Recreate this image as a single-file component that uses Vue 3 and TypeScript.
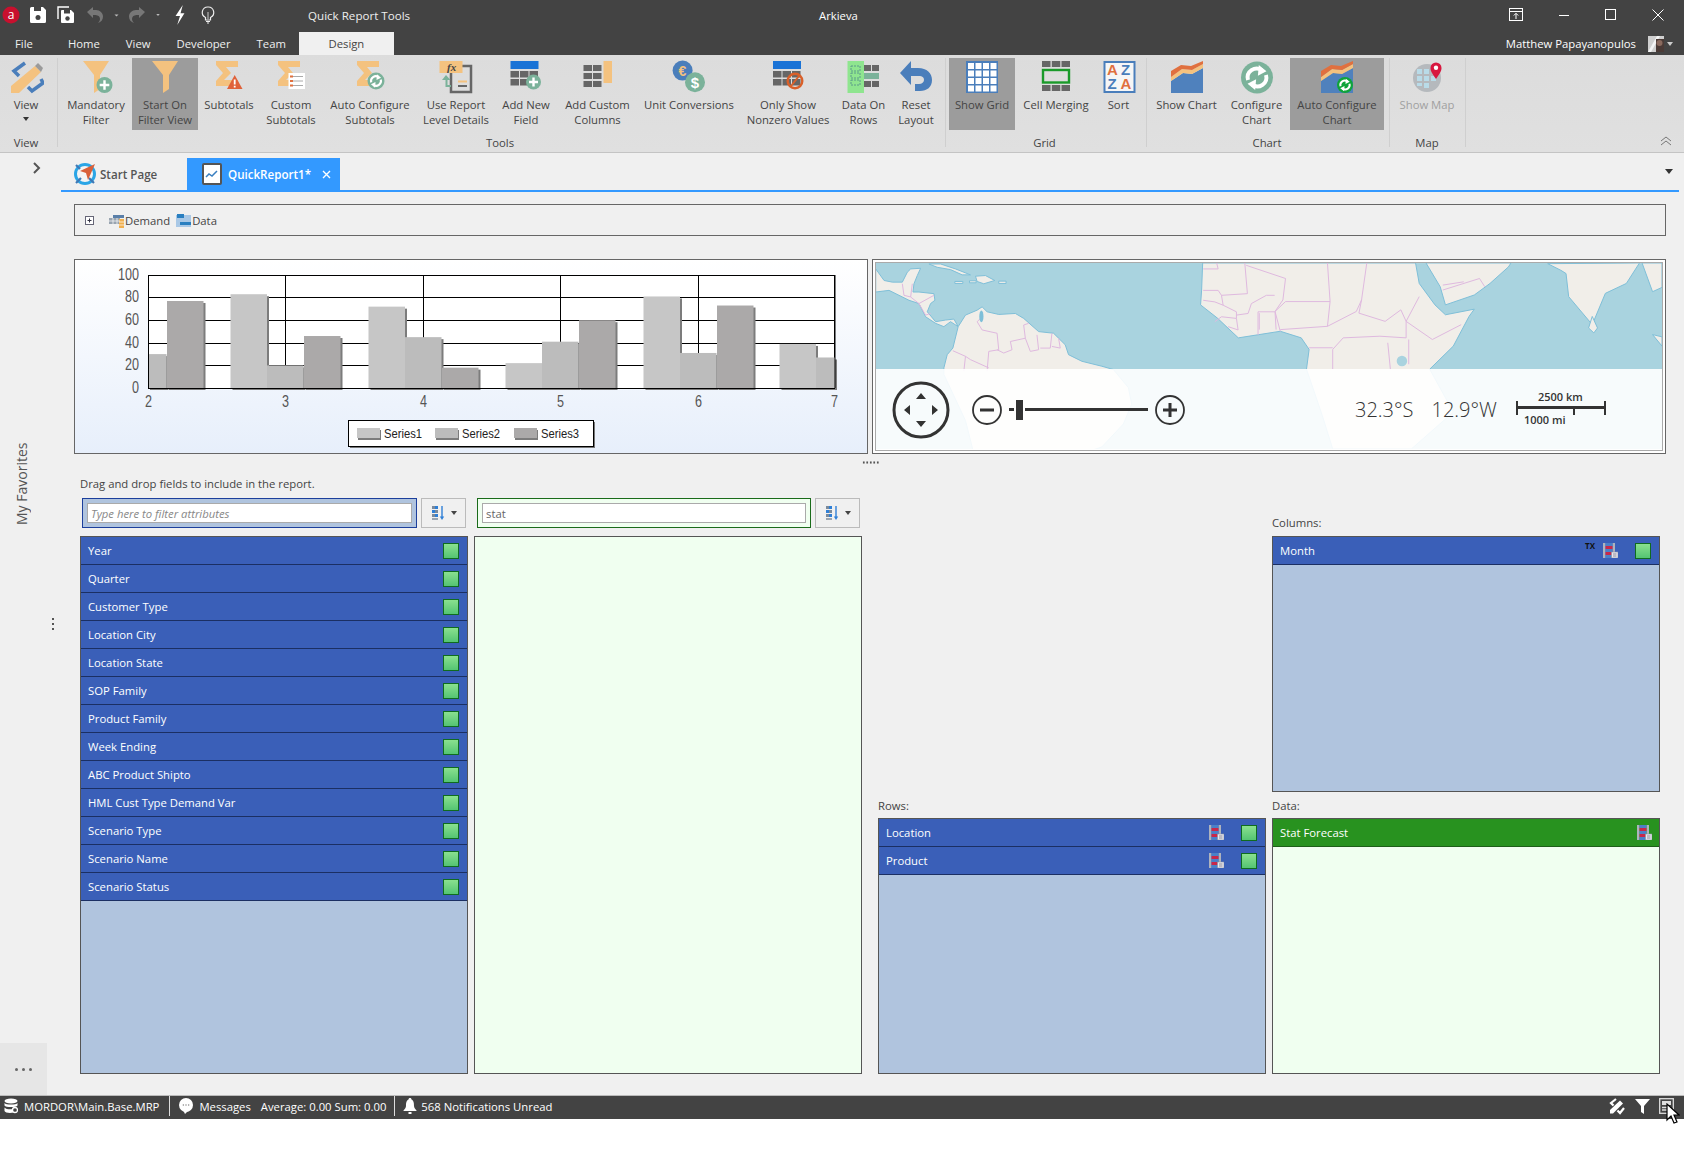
<template>
  <div class="app">
    <svg class="defs" width="0" height="0">
      <symbol id="field-icon" viewBox="0 0 15 15">
        <rect x="0" y="0" width="2.500" height="15" fill="#aeb3bd" />
        <rect x="9.500" y="0" width="2.500" height="15" fill="#aeb3bd" />
        <rect x="2.500" y="0" width="7" height="3" fill="#4a80c8" />
        <rect x="2.500" y="3" width="7" height="3" fill="#c8284a" />
        <rect x="2.500" y="6" width="7" height="3" fill="#4a80c8" />
        <rect x="2.500" y="9" width="7" height="3" fill="#c8284a" />
        <rect x="2.500" y="12" width="7" height="3" fill="#4a80c8" />
        <rect x="8.500" y="9" width="6.500" height="6" fill="#e8e8ee" stroke="#8890a0" stroke-width=".6" />
        <path d="M10 11h3.500M10 13h3.500" stroke="#667" stroke-width=".7" />
      </symbol>
      <symbol id="sort-icon" viewBox="0 0 16 16">
        <rect x="1" y="1" width="3" height="3" fill="#7a8a9c" />
        <rect x="4" y="1" width="3" height="3" fill="#2f7fd6" />
        <rect x="1" y="5" width="3" height="3" fill="#2f7fd6" />
        <rect x="4" y="5" width="3" height="3" fill="#7a8a9c" />
        <rect x="1" y="9" width="3" height="3" fill="#7a8a9c" />
        <rect x="4" y="9" width="3" height="3" fill="#2f7fd6" />
        <rect x="1" y="13" width="6" height="2" fill="#9aa5b1" />
        <path d="M11 1v12" stroke="#2f7fd6" stroke-width="1.400" />
        <path d="M8.800 11.500h4.400L11 15z" fill="#2f7fd6" />
      </symbol>
    </svg>

    <header class="titlebar">
      <div class="title-row">
        <div class="qat">
          <span v-for="q in qatItems" :key="q.name + q.width" class="qat-btn" :style="{ width: q.width + 'px' }">
            <svg :width="q.size" :height="q.size" viewBox="0 0 18 18" v-html="qatIcons[q.name]"></svg>
          </span>
        </div>
        <div class="context-title">Quick Report Tools</div>
        <div class="app-title">Arkieva</div>
        <div class="window-buttons">
          <svg width="14" height="14" viewBox="0 0 14 14" fill="none" stroke="#fff">
            <rect x=".5" y=".5" width="13" height="12" />
            <path d="M.5 3.500h13M7 11V5.500M4.800 7.500 7 5.300l2.200 2.200" />
          </svg>
          <svg width="12" height="12" viewBox="0 0 12 12" stroke="#fff"><path d="M1 6.500h10" /></svg>
          <svg width="12" height="12" viewBox="0 0 12 12" fill="none" stroke="#fff"><rect x=".5" y=".5" width="10" height="10" /></svg>
          <svg width="12" height="12" viewBox="0 0 12 12" stroke="#fff"><path d="M.5.5l11 11M11.500.5l-11 11" /></svg>
        </div>
      </div>
      <div class="tab-row">
        <span class="menu-tab file-tab">File</span>
        <span v-for="t in menuTabs" :key="t" class="menu-tab">{{ t }}</span>
        <span class="menu-tab active">Design</span>
        <span class="user-name">Matthew Papayanopulos</span>
        <svg class="avatar" width="16" height="16" viewBox="0 0 16 16">
          <rect width="16" height="16" fill="#cfcfcf" />
          <path d="M0 16 9 0h3L3 16z" fill="#f4f4f4" />
          <rect x="8" y="3" width="8" height="13" fill="#4a3a36" />
          <circle cx="11.500" cy="7" r="3" fill="#8a6a5e" />
        </svg>
        <span class="avatar-caret"></span>
      </div>
    </header>

    <section class="ribbon">
      <div v-for="g in ribbonGroups" :key="g.label" class="ribbon-group" :class="'group-' + g.label.toLowerCase()">
        <div class="group-items">
          <div
            v-for="item in g.items"
            :key="item.label"
            class="ribbon-btn"
            :class="{ pressed: item.pressed, disabled: item.disabled }"
            :style="{ width: item.width + 'px' }"
          >
            <svg width="36" height="34" viewBox="0 0 36 34" v-html="icons[item.icon]"></svg>
            <span class="btn-label">{{ item.label }}</span>
            <span v-if="item.caret" class="btn-caret"></span>
          </div>
        </div>
        <div class="group-label">{{ g.label }}</div>
      </div>
      <svg class="ribbon-collapse" width="12" height="10" viewBox="0 0 12 10" fill="none" stroke="#777">
        <path d="M1 5l5-4 5 4M1 9l5-4 5 4" />
      </svg>
    </section>

    <div class="workspace">
      <aside class="rail">
        <svg class="rail-chevron" width="10" height="12" viewBox="0 0 10 12" fill="none" stroke="#555" stroke-width="2">
          <path d="M2 1l5 5-5 5" />
        </svg>
        <div class="favorites">My Favorites</div>
        <div class="rail-grip"><i></i><i></i><i></i></div>
        <div class="rail-more"><i></i><i></i><i></i></div>
      </aside>

      <main class="main">
        <div class="doc-tabs">
          <div class="doc-tab start-tab">
            <svg width="24" height="24" viewBox="0 0 24 24">
              <circle cx="12" cy="12" r="9.500" fill="#f4f4f4" stroke="#2aa5e6" stroke-width="3" />
              <path d="M3 21l5-5M21 21l-5-5M3 3l4 4" stroke="#3f78b5" stroke-width="2.200" />
              <path d="M22 2 7 9l6 2 2 7z" fill="#d9603a" />
            </svg>
            <span>Start Page</span>
          </div>
          <div class="doc-tab report-tab">
            <svg width="20" height="22" viewBox="0 0 20 22">
              <rect x="1" y="1" width="18" height="20" rx="1" fill="#fff" stroke="#555" stroke-width="2" />
              <path d="M4 14l3-3 3 2 5-5" fill="none" stroke="#3a7fc0" stroke-width="1.500" />
            </svg>
            <span>QuickReport1*</span>
            <svg class="tab-close" width="9" height="9" viewBox="0 0 9 9" stroke="#fff" stroke-width="1.400"><path d="M1 1l7 7M8 1 1 8" /></svg>
          </div>
          <span class="doc-dropdown"></span>
        </div>

        <div class="doc">
          <div class="source-bar">
            <svg class="expander" width="9" height="9" viewBox="0 0 9 9" fill="#fff" stroke="#667">
              <rect x=".5" y=".5" width="8" height="8" />
              <path d="M2.500 4.500h4M4.500 2.500v4" stroke="#334" />
            </svg>
            <svg width="15" height="14" viewBox="0 0 15 14">
              <rect x="0" y="4" width="11" height="6" fill="#98a4b0" />
              <rect x="4" y="1" width="11" height="3" fill="#5a7fa8" />
              <rect x="10" y="5" width="5" height="9" fill="#f0b050" />
              <path d="M0 7h11M4 4v6M8 4v6M10 8h5M10 11h5" stroke="#fff" stroke-width=".7" />
            </svg>
            <span class="source-name">Demand</span>
            <svg class="data-icon" width="15" height="14" viewBox="0 0 15 14">
              <rect x="0" y="1" width="15" height="12" fill="#a9c8e6" />
              <rect x="1" y="0" width="7" height="4" fill="#2a7fc0" />
              <rect x="4" y="8" width="11" height="3" fill="#2a7fc0" />
            </svg>
            <span class="source-name">Data</span>
          </div>

          <div class="viz-row">
            <div class="chart-box">
              <svg width="792" height="193" viewBox="75 260 792 193">
                <rect x="148" y="275" width="687" height="113" fill="#fff" />
                <g stroke="#000">
                  <path v-for="y in gridY" :key="'h' + y" :d="`M148 ${y}H835`" />
                  <path v-for="x in catX" :key="'v' + x" :d="`M${x} 275V388`" />
                </g>
                <g v-for="b in bars" :key="b.key">
                  <rect :x="b.x + 2" :y="b.y + 2" :width="b.width" :height="b.height" fill="#7c7c7c" />
                  <rect :x="b.x" :y="b.y" :width="b.width" :height="b.height" :fill="b.fill" />
                </g>
                <path d="M148 388.500H835" stroke="#000" />
                <path d="M148.500 275V388M835 275V388" stroke="#000" />
                <g class="axis-text">
                  <text
                    v-for="t in yTicks"
                    :key="t.label"
                    x="139"
                    :y="t.y + 5"
                    text-anchor="end"
                    :textLength="t.label.length * 7"
                    lengthAdjust="spacingAndGlyphs"
                  >{{ t.label }}</text>
                  <text
                    v-for="(x, i) in catX"
                    :key="'x' + x"
                    :x="x"
                    y="407"
                    text-anchor="middle"
                    textLength="7"
                    lengthAdjust="spacingAndGlyphs"
                  >{{ i + 2 }}</text>
                </g>
                <rect x="350" y="422" width="245" height="26" fill="#777" />
                <rect x="348.500" y="420.500" width="245" height="26" fill="#fff" stroke="#000" />
                <g v-for="l in legend" :key="l.label">
                  <rect :x="l.x + 1" y="430" width="23" height="10" fill="#7c7c7c" />
                  <rect :x="l.x" y="428" width="23" height="10" :fill="l.fill" />
                  <text class="legend-text" :x="l.x + 27" y="438" textLength="38" lengthAdjust="spacingAndGlyphs">{{ l.label }}</text>
                </g>
              </svg>
            </div>

            <div class="map-box">
              <div class="map-inner">
                <svg class="map-svg" width="786" height="186" viewBox="29 38 1499 564" preserveAspectRatio="none">
                  <rect x="29" y="38" width="1499" height="564" fill="#a9d3df" />
                  <g fill="#f1eee9" stroke="#7fbfd8">
                    <path v-for="(d, i) in landShapes" :key="i" :d="d" vector-effect="non-scaling-stroke" />
                    <g transform="translate(28.5 36) scale(.634 1)">
                      <path v-for="(d, i) in westLand" :key="i" :d="d" vector-effect="non-scaling-stroke" />
                    </g>
                  </g>
                  <g fill="none" stroke="#dfb9df">
                    <path v-for="(d, i) in borderLines" :key="i" :d="d" vector-effect="non-scaling-stroke" />
                    <g transform="translate(28.5 36) scale(.634 1)">
                      <path v-for="(d, i) in westBorders" :key="i" :d="d" vector-effect="non-scaling-stroke" />
                    </g>
                  </g>
                  <ellipse cx="1032" cy="335" rx="10" ry="16" fill="#a9d3df" />
                  <ellipse cx="230" cy="200" rx="4" ry="18" fill="#7fbfd8" />
                </svg>
                <div class="map-controls">
                  <svg class="map-pan" width="58" height="58" viewBox="0 0 58 58">
                    <circle cx="29" cy="29" r="27" fill="none" stroke="#333" stroke-width="3" />
                    <path d="M29 12l5 6H24zM29 46l-5-6H34zM12 29l6-5V34zM46 29l-6 5V24z" fill="#333" />
                  </svg>
                  <svg class="map-zoom" width="30" height="30" viewBox="0 0 30 30" fill="none" stroke="#333" stroke-width="1.800">
                    <circle cx="15" cy="15" r="14" />
                    <path d="M8 15h14" stroke-width="3" />
                  </svg>
                  <div class="zoom-slider">
                    <i class="slider-dash"></i>
                    <i class="slider-thumb"></i>
                    <i class="slider-line"></i>
                  </div>
                  <svg width="30" height="30" viewBox="0 0 30 30" fill="none" stroke="#333" stroke-width="1.800">
                    <circle cx="15" cy="15" r="14" />
                    <path d="M8 15h14M15 8v14" stroke-width="3" />
                  </svg>
                  <span class="coord lat">32.3°S</span>
                  <span class="coord lng">12.9°W</span>
                  <div class="scale">
                    <span class="scale-km">2500 km</span>
                    <span class="scale-mi">1000 mi</span>
                  </div>
                </div>
              </div>
            </div>
          </div>

          <div class="splitter"></div>

          <div class="designer">
            <div class="available">
              <div class="hint">Drag and drop fields to include in the report.</div>
              <div class="filters">
                <div class="filter attr-filter">
                  <input class="filter-input" placeholder="Type here to filter attributes" />
                </div>
                <button class="sort-btn"><svg width="16" height="16"><use href="#sort-icon" /></svg><i></i></button>
                <div class="filter measure-filter">
                  <input class="filter-input" value="stat" />
                </div>
                <button class="sort-btn"><svg width="16" height="16"><use href="#sort-icon" /></svg><i></i></button>
              </div>
              <div class="lists">
                <div class="pane blue-pane">
                  <div v-for="f in attributes" :key="f" class="field">
                    <span class="field-name">{{ f }}</span>
                    <i class="field-check"></i>
                  </div>
                </div>
                <div class="pane green-pane"></div>
              </div>
            </div>

            <div class="layout-panes">
              <div class="pane-head head-columns">Columns:</div>
              <div class="pane blue-pane pane-columns">
                <div class="field">
                  <span class="field-name">Month</span>
                  <b class="tx">TX</b>
                  <svg class="field-icon" width="15" height="15"><use href="#field-icon" /></svg>
                  <i class="field-check"></i>
                </div>
              </div>
              <div class="pane-head head-rows">Rows:</div>
              <div class="pane-head head-data">Data:</div>
              <div class="pane blue-pane pane-rows">
                <div v-for="f in rowFields" :key="f" class="field">
                  <span class="field-name">{{ f }}</span>
                  <svg class="field-icon" width="15" height="15"><use href="#field-icon" /></svg>
                  <i class="field-check"></i>
                </div>
              </div>
              <div class="pane green-pane pane-data">
                <div class="field measure">
                  <span class="field-name">Stat Forecast</span>
                  <svg class="field-icon" width="15" height="15"><use href="#field-icon" /></svg>
                </div>
              </div>
            </div>
          </div>
        </div>
      </main>
    </div>

    <footer class="statusbar">
      <svg width="14" height="16" viewBox="0 0 14 16" fill="#fff">
        <ellipse cx="7" cy="3" rx="6.500" ry="2.500" />
        <path d="M.5 5c1 2 12 2 13 0v2.500c-1 2-12 2-13 0zM.5 9.500c1 2 7 2 8 1.500l1 3.500c-3 1-8.500.5-9-1.500z" />
        <circle cx="11" cy="12" r="2.500" fill="none" stroke="#fff" stroke-width="1.300" />
      </svg>
      <span class="status-text db">MORDOR\Main.Base.MRP</span>
      <i class="status-sep"></i>
      <svg class="bubble" width="16" height="16" viewBox="0 0 16 16">
        <circle cx="8" cy="7" r="7" fill="#fff" />
        <path d="M5 12l2 4 3-3z" fill="#fff" />
        <path d="M4.800 7h1M7.500 7h1M10.200 7h1" stroke="#444" stroke-width="1.200" />
      </svg>
      <span class="status-text messages">Messages</span>
      <span class="status-text summary">Average: 0.00 Sum: 0.00</span>
      <i class="status-sep"></i>
      <svg class="bell" width="14" height="16" viewBox="0 0 14 16" fill="#fff">
        <path d="M7 0c1 0 1.500.6 1.500 1.500C11 2.500 11 6 11 8c0 2 1.500 3 2.500 4.500V13H.5v-.5C1.500 11 3 10 3 8c0-2 0-5.500 2.500-6.500C5.500.6 6 0 7 0z" />
        <rect x="5.500" y="14" width="3" height="2" />
      </svg>
      <span class="status-text">568 Notifications Unread</span>
      <div class="status-tools">
        <svg width="18" height="18" viewBox="0 0 18 18" fill="none" stroke="#fff" stroke-width="2.200">
          <path d="M2 16.500V13L12 3.500l3 3L5 16.500z" fill="#fff" stroke="none" />
          <path d="M8 2 3 6l2.500 2.500M16 11l-4 5-2.500-2.500" />
        </svg>
        <svg width="17" height="17" viewBox="0 0 17 17" fill="#fff"><path d="M1 1h15l-6 7v8l-3-2V8z" /></svg>
        <svg class="layout-tool" width="15" height="16" viewBox="0 0 15 16" fill="none" stroke="#ddd" stroke-width="1.300">
          <rect x=".7" y=".7" width="13.600" height="14.600" />
          <rect x="3" y="3" width="9" height="4" fill="#ddd" stroke="none" />
          <path d="M3 9.500h9M3 12h9" />
        </svg>
        <svg class="cursor" width="14" height="21" viewBox="0 0 14 21">
          <path d="M1 1v16l4-4 3 7 3-1-3-7h5z" fill="#fff" stroke="#000" stroke-width="1.200" />
        </svg>
      </div>
    </footer>
  </div>
</template>

<script setup lang="ts">
import { computed } from 'vue';

type RibbonItem = {
  label: string;
  width: number;
  icon: string;
  pressed?: boolean;
  disabled?: boolean;
  caret?: boolean;
};

const TAN = '#f4c27f';
const BLUE = '#4a7ebb';
const TEAL = '#7bb29a';
const GRAY = '#666';

const refresh = (cx: number, cy: number, r: number) => {
  const a = r * 0.6;
  const h = r * 0.28;
  return `<g fill="none" stroke="#fff" stroke-width="${r * 0.26}">
    <path d="M${cx - a} ${cy + h * 0.6}A${a} ${a} 0 0 1 ${cx + a * 0.55} ${cy - a * 0.8}"/>
    <path d="M${cx + a} ${cy - h * 0.6}A${a} ${a} 0 0 1 ${cx - a * 0.55} ${cy + a * 0.8}"/></g>
    <path d="M${cx + a * 0.2} ${cy - a * 1.4}L${cx + a * 1.05} ${cy - a * 0.7}L${cx + a * 0.1} ${cy - a * 0.2}Z" fill="#fff"/>
    <path d="M${cx - a * 0.2} ${cy + a * 1.4}L${cx - a * 1.05} ${cy + a * 0.7}L${cx - a * 0.1} ${cy + a * 0.2}Z" fill="#fff"/>`;
};

const plus = (cx: number, cy: number, r: number) =>
  `<circle cx="${cx}" cy="${cy}" r="${r}" fill="${TEAL}"/><path d="M${cx - r * 0.6} ${cy}H${cx + r * 0.6}M${cx} ${cy - r * 0.6}V${cy + r * 0.6}" stroke="#fff" stroke-width="2.400"/>`;

const sigma = () => `<path d="M5 1H27V7H15L20 13L13 20H27V26H5V21L12 13L5 5Z" fill="${TAN}"/>`;

const grayGrid = (x: number, y: number) =>
  [0, 1, 2]
    .flatMap((c) => [0, 1].map((r) => `<rect x="${x + c * 9.5}" y="${y + r * 8}" width="8.500" height="6.500" fill="${GRAY}"/>`))
    .join('');

const chartIcon = `<path d="M2 33V21L14 13L23 14L34 8V33Z" fill="#4f81bd"/><path d="M2 21V17L13 9L23 10L34 4V8L23 14L14 13Z" fill="${TAN}"/><path d="M2 17V11L12 5L22 6L34 1V4L23 10L13 9Z" fill="#e0703f"/>`;

const showGrid = () => {
  let cells = `<rect x="2" y="1" width="32" height="32" fill="${BLUE}"/>`;
  for (let c = 0; c < 4; c++) {
    for (let r = 0; r < 4; r++) {
      cells += `<rect x="${4 + c * 7.5}" y="${3 + r * 7.5}" width="6" height="6" fill="#fff"/>`;
    }
  }
  return cells;
};

const icons: Record<string, string> = {
  view: `<path d="M3 33V26L27 6L33 12L11 33Z" fill="${TAN}"/><path d="M27 6L30 3L35 8L33 12Z" fill="#9a9a9a"/>
    <path d="M17 3L6 11L11 16" fill="none" stroke="${BLUE}" stroke-width="3.500"/>
    <path d="M33 19L35 23L24 31L20 27" fill="none" stroke="${BLUE}" stroke-width="3.500"/>`,
  mandatory: `<path d="M5 1H31L22 15V29L16 33V15Z" fill="${TAN}"/>${plus(26.5, 25, 8)}`,
  filter: `<path d="M5 1H31L22 15V29L16 33V15Z" fill="${TAN}"/>`,
  subtotals: `${sigma()}<path d="M16 29L23.700 15L31.500 29Z" fill="#e0623a"/><path d="M23.700 19.500V24.500M23.700 25.800V27.500" stroke="#fff" stroke-width="1.800"/>`,
  customSub: `${sigma()}<rect x="15.500" y="13" width="16.500" height="16" fill="#fff"/><path d="M17 16.500h3M17 21h3M17 25.500h3" stroke="#e0703f" stroke-width="1.800"/><path d="M20 16.500h10M20 21h10M20 25.500h10" stroke="#aaa" stroke-width="1"/>`,
  autoSub: `${sigma()}<circle cx="24" cy="21" r="8.500" fill="${TEAL}"/>${refresh(24, 21, 8)}`,
  report: `<rect x="13" y="6" width="20" height="26" fill="none" stroke="${GRAY}" stroke-width="2.500"/><path d="M20 21.500h9" stroke="${TAN}" stroke-width="2"/><path d="M20 26h9" stroke="${GRAY}" stroke-width="2"/>
    <rect x="1.500" y="1" width="23" height="12" fill="${TAN}"/><text x="9" y="11" font-family="'Liberation Serif',serif" font-style="italic" font-weight="700" font-size="11" fill="#444">fx</text>
    <path d="M8 15L12.500 20H9.500V25H13V27H7.500V20H4Z" fill="${TEAL}"/>`,
  addField: `<rect x="2.500" y="1" width="28" height="8" fill="#1a73d6"/>${grayGrid(2.5, 11)}${plus(25.5, 22, 7.5)}`,
  addColumn: `<g fill="${GRAY}"><rect x="3.500" y="5" width="8.500" height="6"/><rect x="13" y="5" width="8.500" height="6"/><rect x="3.500" y="13" width="8.500" height="6"/><rect x="13" y="13" width="8.500" height="6"/><rect x="3.500" y="21" width="8.500" height="6"/><rect x="13" y="21" width="8.500" height="6"/></g><rect x="23.500" y="1" width="8.500" height="22" fill="${TAN}"/>`,
  units: `<circle cx="11.600" cy="10.600" r="10" fill="${BLUE}"/><text x="11.500" y="15.500" text-anchor="middle" font-family="'Liberation Sans',sans-serif" font-weight="700" font-size="14" fill="${TAN}">€</text>
    <circle cx="24" cy="22.300" r="10" fill="${TEAL}"/><text x="24" y="27.500" text-anchor="middle" font-family="'Liberation Sans',sans-serif" font-weight="700" font-size="15" fill="#fff">$</text>`,
  nonzero: `<rect x="3" y="1" width="28" height="8" fill="#1a73d6"/>${grayGrid(3, 11)}<circle cx="25" cy="21" r="7.300" fill="none" stroke="#d9602a" stroke-width="2.400"/><path d="M21 26L29 16" stroke="#d9602a" stroke-width="2"/>`,
  dataRows: `<rect x="1.500" y="1" width="16.500" height="32" fill="#8fe58f"/><g fill="none" stroke="#5a9a8a" stroke-width="1" stroke-dasharray="2 1"><rect x="5" y="6" width="9" height="5"/><rect x="5" y="13" width="9" height="5"/><rect x="5" y="20" width="9" height="5"/></g>
    <g fill="${GRAY}"><rect x="18" y="5" width="7" height="6"/><rect x="26" y="5" width="7" height="6"/><rect x="18" y="21" width="7" height="6"/><rect x="26" y="21" width="7" height="6"/></g><rect x="18" y="13" width="15" height="6" fill="${TEAL}"/>`,
  reset: `<path d="M2 13L13 1V8H20C29 8 34 13 34 20C34 27 29 31 22 31H17V24H21C24 24 26 22 26 20C26 17 24 16 21 16H13V25Z" fill="${BLUE}"/>`,
  grid: showGrid(),
  merge: `<g fill="${GRAY}"><rect x="4" y="1" width="8.500" height="6"/><rect x="13.800" y="1" width="8.500" height="6"/><rect x="23.500" y="1" width="8.500" height="6"/><rect x="4" y="25" width="8.500" height="6"/><rect x="13.800" y="25" width="8.500" height="6"/><rect x="23.500" y="25" width="8.500" height="6"/></g><rect x="5" y="10" width="26" height="12.500" fill="none" stroke="#1a9a2a" stroke-width="2.400"/>`,
  sort: `<rect x="3.500" y="2" width="30" height="30" fill="#f6f6f6" stroke="${BLUE}" stroke-width="2"/><g font-family="'Liberation Sans',sans-serif" font-weight="700" font-size="15"><text x="6" y="15" fill="#e0703f">A</text><text x="6.500" y="29" fill="${BLUE}">Z</text><text x="20" y="15" fill="${BLUE}">Z</text><text x="19.500" y="29" fill="#e0703f">A</text></g>`,
  chart: chartIcon,
  configure: `<circle cx="18" cy="17.500" r="16" fill="${TEAL}"/>${refresh(18, 17.5, 15)}`,
  autoChart: `${chartIcon}<circle cx="26" cy="25" r="8" fill="#0fa43a"/>${refresh(26, 25, 7.5)}`,
  map: `<circle cx="18" cy="18" r="14" fill="#b5b9bd"/><g fill="#b9dbe8"><rect x="8" y="9" width="5" height="5"/><rect x="15" y="9" width="5" height="5"/><rect x="8" y="16" width="5" height="5"/><rect x="15" y="16" width="5" height="5"/><rect x="22" y="16" width="5" height="5"/><rect x="15" y="23" width="5" height="5"/><rect x="8" y="23" width="5" height="3"/></g>
    <path d="M27 19C23 13 21.500 11 21.500 8A5.500 5.500 0 0 1 32.500 8C32.500 11 31 13 27 19Z" fill="#d8173f"/><circle cx="27" cy="7.800" r="2.200" fill="#fff"/>`,
};

const qatItems = [
  { name: 'logo', width: 22, size: 18 },
  { name: 'save', width: 31, size: 18 },
  { name: 'saveAll', width: 26, size: 18 },
  { name: 'undo', width: 32, size: 18 },
  { name: 'caret', width: 10, size: 9 },
  { name: 'redo', width: 32, size: 18 },
  { name: 'caret', width: 10, size: 8 },
  { name: 'bolt', width: 34, size: 20 },
  { name: 'bulb', width: 22, size: 18 },
];

const qatIcons: Record<string, string> = {
  logo: `<circle cx="9" cy="9" r="8.500" fill="#c8102e"/><text x="9" y="13" text-anchor="middle" font-family="'Open Sans',sans-serif" font-size="12" fill="#fff">a</text>`,
  save: `<path d="M1 2.500A1.500 1.500 0 0 1 2.500 1H14L17 4V15.500A1.500 1.500 0 0 1 15.500 17H2.500A1.500 1.500 0 0 1 1 15.500Z" fill="#fff"/><rect x="5" y="1" width="7" height="4" fill="#444"/><circle cx="9" cy="11.500" r="2.500" fill="#444"/>`,
  saveAll: `<path d="M1 13V1H12" fill="none" stroke="#fff" stroke-width="1.400"/><path d="M4 5A1 1 0 0 1 5 4H14L17 7V16A1 1 0 0 1 16 17H5A1 1 0 0 1 4 16Z" fill="#fff"/><rect x="7" y="4" width="6" height="3.500" fill="#444"/><circle cx="10.500" cy="12.500" r="2.200" fill="#444"/>`,
  undo: `<path d="M1 6L7 1V4H10C14 4 17 7 17 10.500C17 14 15 16 12 17C14 15 14.500 13 13.500 11C12.500 9.500 11 9 7 9V12Z" fill="#777"/>`,
  redo: `<path d="M17 6L11 1V4H8C4 4 1 7 1 10.500C1 14 3 16 6 17C4 15 3.500 13 4.500 11C5.500 9.500 7 9 11 9V12Z" fill="#777"/>`,
  caret: `<path d="M5 7H13L9 11Z" fill="#bbb"/>`,
  bolt: `<path d="M11.500 0L5 10H9L6.500 18L13 7.500H9.500Z" fill="#fff"/>`,
  bulb: `<path d="M9 1A5.500 5.500 0 0 0 6.500 11.500V14H11.500V11.500A5.500 5.500 0 0 0 9 1Z" fill="none" stroke="#eee" stroke-width="1.200"/><path d="M7 15.500H11M8 17H10" stroke="#eee" stroke-width="1"/><path d="M9 6V13" stroke="#eee" stroke-width=".8"/>`,
};

const menuTabs = ['Home', 'View', 'Developer', 'Team'];

const ribbonGroups: { label: string; items: RibbonItem[] }[] = [
  { label: 'View', items: [{ label: 'View', width: 52, icon: 'view', caret: true }] },
  {
    label: 'Tools',
    items: [
      { label: 'Mandatory Filter', width: 72, icon: 'mandatory' },
      { label: 'Start On Filter View', width: 66, icon: 'filter', pressed: true },
      { label: 'Subtotals', width: 62, icon: 'subtotals' },
      { label: 'Custom Subtotals', width: 62, icon: 'customSub' },
      { label: 'Auto Configure Subtotals', width: 96, icon: 'autoSub' },
      { label: 'Use Report Level Details', width: 76, icon: 'report' },
      { label: 'Add New Field', width: 64, icon: 'addField' },
      { label: 'Add Custom Columns', width: 79, icon: 'addColumn' },
      { label: 'Unit Conversions', width: 104, icon: 'units' },
      { label: 'Only Show Nonzero Values', width: 94, icon: 'nonzero' },
      { label: 'Data On Rows', width: 57, icon: 'dataRows' },
      { label: 'Reset Layout', width: 48, icon: 'reset' },
    ],
  },
  {
    label: 'Grid',
    items: [
      { label: 'Show Grid', width: 66, icon: 'grid', pressed: true },
      { label: 'Cell Merging', width: 82, icon: 'merge' },
      { label: 'Sort', width: 43, icon: 'sort' },
    ],
  },
  {
    label: 'Chart',
    items: [
      { label: 'Show Chart', width: 73, icon: 'chart' },
      { label: 'Configure Chart', width: 67, icon: 'configure' },
      { label: 'Auto Configure Chart', width: 94, icon: 'autoChart', pressed: true },
    ],
  },
  { label: 'Map', items: [{ label: 'Show Map', width: 70, icon: 'map', disabled: true }] },
];

// chart data, null where a series has no bar in that category
const PLOT_LEFT = 148;
const PLOT_RIGHT = 835;
const PLOT_BOTTOM = 388;
const PER_UNIT = 1.13;
const catX = [148.5, 285.5, 423.5, 560.5, 698.5, 834.5];
const gridY = [275.5, 297.5, 320.5, 343.5, 365.5];
const series = [
  { fill: '#c6c6c6', offset: -55, values: [null, 83, 72, 22, 81, 39] },
  { fill: '#bcbcbc', offset: -18.5, values: [30, 20, 45, 41, 31, 27] },
  { fill: '#aba9a9', offset: 18.5, values: [77, 46, 18, 60, 73, null] },
];

const bars = computed(() =>
  series.flatMap((s, si) =>
    s.values.flatMap((v, i) => {
      if (v === null) return [];
      const left = Math.max(catX[i] + s.offset, PLOT_LEFT);
      const right = Math.min(catX[i] + s.offset + 36.5, PLOT_RIGHT);
      const height = v * PER_UNIT;
      return [{ key: `${si}-${i}`, x: left, y: PLOT_BOTTOM - height, width: right - left, height, fill: s.fill }];
    }),
  ),
);

const yTicks = [
  { label: '100', y: 275 },
  { label: '80', y: 297 },
  { label: '60', y: 320 },
  { label: '40', y: 343 },
  { label: '20', y: 365 },
  { label: '0', y: 388 },
];

const legend = [
  { label: 'Series1', x: 357, fill: '#c6c6c6' },
  { label: 'Series2', x: 435, fill: '#bcbcbc' },
  { label: 'Series3', x: 514, fill: '#aba9a9' },
];

const westLand = [
  'M0 20L25 55L50 60L80 60L95 30L105 20L135 18L125 40L115 65L112 90L130 90L175 95L178 115L165 125L155 150L180 180L210 175L235 172L248 195L225 180L205 195L180 185L150 165L130 125L100 115L70 100L40 85L0 90Z',
  'M160 5L195 5L240 20L285 38L260 38L225 22L185 15Z',
  'M300 42L330 40L358 55L325 65L305 58Z',
  'M238 58L262 58L262 64L238 64Z',
  'M282 56L302 56L302 62L282 62Z',
  'M370 57L392 57L392 64L370 64Z',
  'M205 320L215 280L232 260L248 195L270 160L305 145L320 135L335 150L370 158L420 155L445 170L490 210L535 215L570 250L580 280L620 300L680 315L715 325L760 380L770 430L745 490L680 560L560 600L300 600L270 480L205 340Z',
];

const westBorders = [
  'M80 65L85 100L105 105L110 65M105 105L130 125L175 100M130 125L150 160L165 155',
  'M320 165L305 180L320 205L365 215L370 265L340 270L335 330',
  'M365 265L385 275L410 265L405 240L450 230L445 190L460 185',
  'M450 230L465 270L490 265L485 220M495 260L525 260L530 215M530 255L555 260L550 230',
  'M232 268L270 285L285 295L340 320M270 285L265 330',
  'M985 20H1030L1025 0M1110 0L1118 95L1040 100L1030 85L985 85',
  'M1040 100L1045 130L1085 150L1085 170L1040 165L1020 180',
  'M985 115L1020 120L1045 130M1085 160L1120 155L1130 125L1175 100L1200 100',
  'M1150 150H1200M1150 150L1150 220M1085 170L1090 205L1060 195',
];

const landShapes = [
  'M652 38L650 120L648 165L680 205L720 265L800 245L840 265L855 300L850 360L880 500L900 602L1050 602L1130 490L1085 360L1130 290L1160 200L1170 178L1115 195L1095 165L1065 100L1058 38Z',
  'M1078 38L1105 110L1115 165L1170 135L1200 100L1235 50L1240 38Z',
  'M1310 40L1335 60L1345 70L1350 140L1395 225L1420 130L1460 100L1485 38Z',
  'M1490 38H1528V112L1510 125Z',
  'M1528 290L1510 255L1528 262Z',
  'M1395 200L1405 235L1398 250L1388 235Z',
];

const borderLines = [
  'M810 85L735 45M810 85L805 150L790 185',
  'M890 38L895 155L810 155L790 185L800 245M895 155L890 230L800 240',
  'M965 38L955 150L945 185L890 230M955 150L950 190L1000 215L1030 180L1040 215L1090 270L1145 225',
  'M1040 215L1040 265L990 260L920 265L900 300L900 360',
  'M1065 140L1040 215M1005 280L1010 360M1045 270L1045 345M855 295L900 295',
  'M760 190L760 240M790 185L792 240',
  'M1110 120L1180 85L1190 110M1110 105L1150 95',
];

const attributes = [
  'Year',
  'Quarter',
  'Customer Type',
  'Location City',
  'Location State',
  'SOP Family',
  'Product Family',
  'Week Ending',
  'ABC Product Shipto',
  'HML Cust Type Demand Var',
  'Scenario Type',
  'Scenario Name',
  'Scenario Status',
];

const rowFields = ['Location', 'Product'];
</script>

<style>
html,
body {
  margin: 0;
  background: #fff;
}
</style>

<style scoped>
.app {
  width: 1684px;
  height: 1160px;
  display: flex;
  flex-direction: column;
  font-family: 'Open Sans', 'Noto Sans', sans-serif;
  font-size: 11.3px;
  color: #444;
  background: #fff;
  overflow: hidden;
}

.defs {
  position: absolute;
}

.titlebar {
  height: 55px;
  flex: none;
  background: #434343;
  color: #fff;
}

.title-row {
  height: 32px;
  box-sizing: border-box;
  padding-bottom: 2px;
  display: flex;
  align-items: center;
}

.qat {
  width: 308px;
  display: flex;
  align-items: center;
}

.qat-btn {
  display: flex;
  justify-content: center;
  flex: none;
}

.context-title {
  width: 511px;
  color: #eee;
  font-size: 11.6px;
}

.app-title {
  flex: 1;
}

.window-buttons {
  display: flex;
  align-items: center;
  gap: 35px;
  padding-right: 20px;
}

.tab-row {
  height: 23px;
  display: flex;
  align-items: center;
}

.menu-tab {
  padding: 0 13px;
  line-height: 23px;
  color: #f0f0f0;
  font-size: 11.3px;
}

.file-tab {
  margin: 0 9px 0 2px;
}

.menu-tab.active {
  width: 95px;
  box-sizing: border-box;
  text-align: center;
  padding: 0;
  background: #f0f0f0;
  color: #444;
}

.user-name {
  margin-left: auto;
  margin-right: 12px;
}

.avatar-caret {
  width: 0;
  height: 0;
  margin: 0 11px 0 3px;
  border: 3px solid transparent;
  border-top: 4px solid #ccc;
  border-bottom: 0;
}

.ribbon {
  height: 98px;
  flex: none;
  box-sizing: border-box;
  display: flex;
  position: relative;
  padding-top: 3px;
  background: linear-gradient(#dcdcdc, #e0e0e0);
  border-bottom: 1px solid #c4c4c4;
}

.ribbon-group {
  height: 89px;
  border-right: 1px solid #cfcfcf;
}

.group-view {
  padding-right: 5px;
}

.group-tools {
  padding: 0 5px 0 2px;
}

.group-grid {
  padding: 0 6px 0 3px;
}

.group-chart {
  padding: 0 5px 0 3px;
}

.group-map {
  padding: 0 3px 0 2px;
}

.group-items {
  display: flex;
  height: 72px;
}

.ribbon-btn {
  flex: none;
  display: flex;
  flex-direction: column;
  align-items: center;
  padding-top: 2px;
  box-sizing: border-box;
  text-align: center;
  line-height: 15px;
}

.ribbon-btn.pressed {
  background: #9c9c9c;
}

.ribbon-btn.disabled {
  color: #a0a0a0;
}

.btn-label {
  margin-top: 3px;
  padding: 0 2px;
}

.btn-caret {
  width: 0;
  height: 0;
  margin-top: 5px;
  border: 3px solid transparent;
  border-top: 4px solid #333;
  border-bottom: 0;
}

.group-label {
  margin-top: 5px;
  line-height: 16px;
  text-align: center;
}

.ribbon-collapse {
  position: absolute;
  right: 12px;
  bottom: 6px;
}

.workspace {
  height: 942px;
  flex: none;
  display: flex;
  background: #f0f0f0;
}

.rail {
  width: 61px;
  flex: none;
  display: flex;
  flex-direction: column;
  color: #555;
}

.rail-chevron {
  margin: 9px 0 0 32px;
  height: 12px;
  flex: none;
}

.favorites {
  writing-mode: vertical-rl;
  transform: rotate(180deg);
  margin: 267px 0 0 13px;
  width: 18px;
  height: 84px;
  font-size: 14px;
  line-height: 18px;
  white-space: nowrap;
}

.rail-grip {
  margin: 93px 0 0 52px;
  display: flex;
  flex-direction: column;
  gap: 3px;
}

.rail-grip i {
  width: 2px;
  height: 2px;
  background: #555;
}

.rail-more {
  margin-top: auto;
  width: 47px;
  height: 52px;
  background: #e6e6e6;
  display: flex;
  align-items: center;
  justify-content: center;
  gap: 4px;
}

.rail-more i {
  width: 3px;
  height: 3px;
  border-radius: 50%;
  background: #666;
}

.main {
  width: 1618px;
  flex: none;
}

.doc-tabs {
  height: 39px;
  box-sizing: border-box;
  display: flex;
  align-items: flex-end;
  border-bottom: 2px solid #3399ff;
}

.doc-tab {
  display: flex;
  align-items: center;
  height: 32px;
  color: #555;
  font-size: 11.6px;
  font-weight: 600;
}

.start-tab {
  width: 126px;
  box-sizing: border-box;
  padding-left: 12px;
  gap: 3px;
}

.report-tab {
  width: 153px;
  box-sizing: border-box;
  padding-left: 15px;
  gap: 6px;
  background: #3399ff;
  color: #fff;
}

.tab-close {
  margin-left: 5px;
}

.doc-dropdown {
  width: 0;
  height: 0;
  align-self: center;
  margin-left: auto;
  margin-right: 6px;
  border: 4px solid transparent;
  border-top: 5px solid #333;
  border-bottom: 0;
}

.doc {
  margin: 12px 13px 0;
}

.source-bar {
  height: 32px;
  box-sizing: border-box;
  border: 1px solid #666;
  display: flex;
  align-items: center;
  padding: 1px 0 0 10px;
}

.expander {
  margin-right: 15px;
}

.source-name {
  margin-left: 1px;
}

.data-icon {
  margin-left: 6px;
}

.viz-row {
  margin-top: 23px;
  display: flex;
  gap: 4px;
}

.chart-box {
  width: 794px;
  height: 195px;
  box-sizing: border-box;
  border: 1px solid #666;
  background: linear-gradient(#fff, #e7effb);
}

.chart-box svg {
  display: block;
}

.axis-text text {
  font-family: 'Liberation Sans', sans-serif;
  font-size: 16px;
  fill: #555;
}

.legend-text {
  font-family: 'Liberation Sans', sans-serif;
  font-size: 13px;
  fill: #222;
}

.map-box {
  width: 794px;
  height: 195px;
  box-sizing: border-box;
  border: 1px solid #666;
  padding: 2px;
  background: #fff;
}

.map-inner {
  height: 100%;
  box-sizing: border-box;
  border: 1px solid #aaa;
  position: relative;
  overflow: hidden;
}

.map-svg {
  display: block;
}

.map-controls {
  position: absolute;
  left: 0;
  right: 0;
  top: 106px;
  bottom: 0;
  display: flex;
  align-items: center;
  background: rgba(255, 255, 255, 0.9);
  color: #333;
  padding-left: 16px;
}

.map-pan {
  margin-right: 22px;
}

.zoom-slider {
  width: 139px;
  margin: 0 7px;
  height: 20px;
  display: flex;
  align-items: center;
}

.slider-dash {
  width: 5px;
  height: 3px;
  background: #333;
}

.slider-thumb {
  width: 7px;
  height: 20px;
  margin: 0 2px;
  background: #333;
}

.slider-line {
  flex: 1;
  height: 3px;
  background: #333;
}

.coord {
  font-size: 20px;
  font-weight: 300;
  color: #333;
}

.lat {
  margin-left: 170px;
}

.lng {
  margin-left: 18px;
}

.scale {
  position: relative;
  width: 90px;
  height: 14px;
  margin-left: 19px;
  margin-top: -4px;
  border-left: 2px solid #333;
  border-right: 2px solid #333;
  box-sizing: border-box;
  background: linear-gradient(#333, #333) 0 5px / 100% 3px no-repeat;
}

.scale::after {
  content: '';
  position: absolute;
  left: 55px;
  top: 6px;
  width: 2px;
  height: 8px;
  background: #333;
}

.scale-km,
.scale-mi {
  position: absolute;
  font-size: 11px;
  font-weight: 600;
  white-space: nowrap;
  color: #333;
}

.scale-km {
  left: 20px;
  top: -12px;
}

.scale-mi {
  left: 6px;
  top: 11px;
}

.splitter {
  height: 22px;
  background: radial-gradient(circle, #555 1px, transparent 1.2px) 0 7px / 3.5px 3px repeat-x;
  width: 18px;
  margin-left: 788px;
}

.designer {
  margin-left: 6px;
  display: flex;
  gap: 16px;
}

.available {
  width: 782px;
  flex: none;
}

.hint {
  height: 22px;
  line-height: 16px;
}

.filters {
  display: flex;
  height: 30px;
  padding-left: 2px;
}

.filter {
  width: 335px;
  height: 30px;
  box-sizing: border-box;
  padding: 4px;
  flex: none;
}

.attr-filter {
  border: 1px solid #1c3f9c;
  background: #b0c4de;
}

.measure-filter {
  width: 334px;
  border: 1px solid #1a6b1a;
  background: #f0fff0;
}

.filter-input {
  display: block;
  width: 100%;
  height: 20px;
  box-sizing: border-box;
  border: 1px solid #aaa;
  background: #fff;
  padding: 0 3px;
  font: 11.3px 'Open Sans', sans-serif;
  color: #666;
  outline: none;
}

.filter-input::placeholder {
  color: #888;
  font-style: italic;
  opacity: 1;
}

.sort-btn {
  width: 45px;
  height: 30px;
  flex: none;
  box-sizing: border-box;
  margin: 0 11px 0 4px;
  padding: 0;
  border: 1px solid #bbb;
  background: #f0f0f0;
  display: flex;
  align-items: center;
  justify-content: center;
  gap: 4px;
}

.sort-btn:last-child {
  margin: 0 0 0 4px;
}

.sort-btn i {
  width: 0;
  height: 0;
  border: 3px solid transparent;
  border-top: 4px solid #444;
  border-bottom: 0;
}

.lists {
  display: flex;
  gap: 6px;
  margin-top: 8px;
  height: 538px;
}

.pane {
  box-sizing: border-box;
  border: 1px solid #555;
  width: 388px;
}

.blue-pane {
  background: #b0c4de;
}

.green-pane {
  background: #f0fff0;
}

.field {
  height: 28px;
  box-sizing: border-box;
  display: flex;
  align-items: center;
  padding: 0 8px 0 7px;
  background: #3a5fb8;
  border-bottom: 1px solid #1b2f63;
  color: #fff;
}

.measure {
  background: #28921f;
  border-color: #1d5f18;
  padding-right: 7px;
}

.field-name {
  flex: 1;
}

.field-check {
  width: 16px;
  height: 16px;
  box-sizing: border-box;
  border: 1px solid #0f6b1f;
  background: linear-gradient(#8ae08f, #54c473);
}

.field-icon {
  margin-right: 17px;
}

.measure .field-icon {
  margin-right: 0;
}

.tx {
  font-size: 8px;
  color: #111;
  margin: -10px 8px 0 0;
}

.layout-panes {
  display: grid;
  grid-template-columns: 388px 388px;
  grid-template-rows: 60px 256px 26px 256px;
  column-gap: 6px;
}

.layout-panes .pane {
  width: auto;
}

.pane-head {
  display: flex;
  align-items: flex-end;
  padding-bottom: 5px;
  box-sizing: border-box;
  line-height: 16px;
}

.head-rows,
.head-data {
  padding-bottom: 4px;
}

.head-columns {
  grid-column: 2;
  grid-row: 1;
}

.pane-columns {
  grid-column: 2;
  grid-row: 2;
}

.head-rows {
  grid-column: 1;
  grid-row: 3;
}

.head-data {
  grid-column: 2;
  grid-row: 3;
}

.pane-rows {
  grid-column: 1;
  grid-row: 4;
}

.pane-data {
  grid-column: 2;
  grid-row: 4;
}

.statusbar {
  height: 24px;
  flex: none;
  background: #434343;
  display: flex;
  align-items: center;
  padding: 0 0 3px 4px;
  color: #fff;
  border-top: 1px solid #bbb;
  box-sizing: border-box;
}

.status-text {
  white-space: nowrap;
}

.db {
  margin: 0 2px 0 6px;
}

.status-sep {
  width: 1px;
  height: 20px;
  background: #ddd;
  margin: 0 8px;
}

.bubble {
  margin: 0 5px 0 0;
}

.messages {
  margin-right: 10px;
}

.bell {
  margin: 0 4px 0 0;
}

.status-tools {
  margin-left: auto;
  display: flex;
  align-items: center;
  gap: 8px;
  padding-right: 10px;
  position: relative;
}

.cursor {
  position: absolute;
  right: 4px;
  top: 6px;
}
</style>
